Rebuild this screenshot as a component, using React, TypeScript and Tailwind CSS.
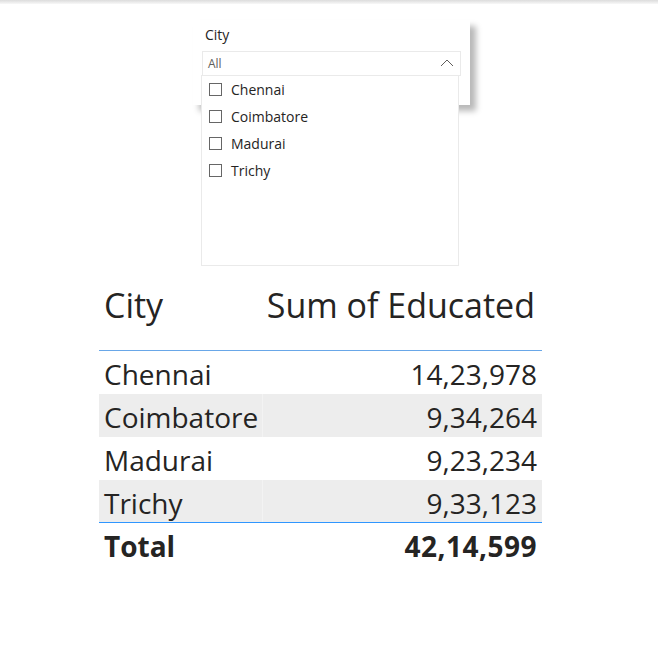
const cities = ["Chennai", "Coimbatore", "Madurai", "Trichy"];

const rows = [
  { city: "Chennai", value: "14,23,978" },
  { city: "Coimbatore", value: "9,34,264" },
  { city: "Madurai", value: "9,23,234" },
  { city: "Trichy", value: "9,33,123" },
];

export default function App() {
  return (
    <div
      className="relative w-[658px] h-[664px] bg-white text-[#252423] overflow-hidden"
      style={{ fontFamily: '"Open Sans", "Noto Sans", sans-serif' }}
    >
      <div className="h-[4px] bg-gradient-to-b from-[#dcdcdc] to-[#f8f8f8]" />

      {/* slicer */}
      <div className="relative ml-[193px] mt-[16px] w-[277px] h-[85px] bg-white shadow-[6px_6px_6px_rgba(0,0,0,0.28)]">
        <div className="pl-[12px] pt-[6px] text-[14px] leading-[18px] text-[#252423]">City</div>
        <div className="mx-[9px] mt-[7px] h-[25px] border border-[#eaeaea] flex items-center justify-between pl-[5px] pr-[6px]">
          <span className="text-[12px] text-[#605e5c]">All</span>
          <svg width="14" height="8" viewBox="0 0 14 8" className="mb-[2px]">
            <polyline points="1,7 7,1 13,7" fill="none" stroke="#605e5c" strokeWidth="1" />
          </svg>
        </div>
        <div className="absolute left-[8px] top-[55px] w-[258px] h-[191px] bg-white border border-[#eaeaea] z-10">
          {cities.map((c) => (
            <div key={c} className="flex items-center h-[27px] pl-[7px] gap-[9px]">
              <span className="w-[13px] h-[13px] border border-[#666] bg-white" />
              <span className="text-[14px] text-[#252423]">{c}</span>
            </div>
          ))}
        </div>
      </div>

      {/* table */}
      <div className="ml-[99px] mt-[178px] w-[443px]">
        <div className="flex h-[68px] border-b border-[#69a7e8]">
          <div className="w-[164px] pl-[5px] text-[34px] leading-[44px]">City</div>
          <div className="flex-1 pr-[7px] text-right text-[34px] leading-[44px]">Sum of Educated</div>
        </div>
        {rows.map((r, i) => (
          <div
            key={r.city}
            className={`flex h-[43px] items-center text-[28px] ${i % 2 === 1 ? "bg-[#ededed]" : "bg-white"} ${i === rows.length - 1 ? "border-b border-[#2f96ff]" : ""}`}
          >
            <div className={`w-[164px] h-full flex items-center pl-[5px] pt-[3px] ${i % 2 === 1 ? "border-r border-[#f3f3f3]" : ""}`}>
              {r.city}
            </div>
            <div className="flex-1 h-full flex items-center justify-end pr-[5px] pt-[3px]">{r.value}</div>
          </div>
        ))}
        <div className="flex h-[46px] items-center text-[28px] font-bold">
          <div className="w-[164px] pl-[5px]">Total</div>
          <div className="flex-1 text-right pr-[5px] tracking-[0.5px]">42,14,599</div>
        </div>
      </div>
    </div>
  );
}
